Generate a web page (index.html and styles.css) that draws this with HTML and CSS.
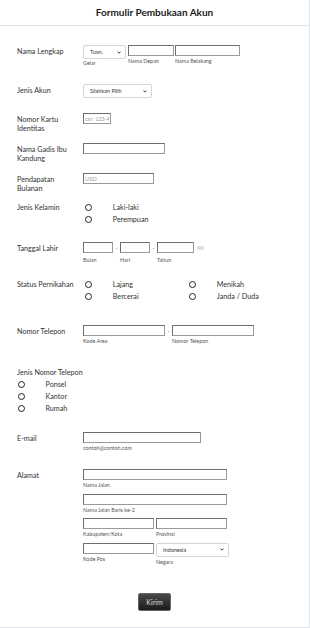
FILE: index.html
```html
<!DOCTYPE html>
<html lang="id">
<head>
    <meta charset="UTF-8">
    <meta name="viewport" content="width=device-width, initial-scale=1.0">
    <title>Formulir Pembukaan Akun</title>
    <link rel="stylesheet" href="styles.css">
</head>
<body>
    <div class="form">
        <div class="form-header">Formulir Pembukaan Akun</div>
        <div class="form-body">

            <div class="row row-name">
                <div class="label">Nama Lengkap</div>
                <div class="fields">
                    <div class="field">
                        <div class="select select-title"><span>Tuan.</span><svg width="4" height="3" viewBox="0 0 4 3"><path d="M0.4 0.5 L2 2.2 L3.6 0.5" fill="none" stroke="#333" stroke-width="0.9"/></svg></div>
                        <span class="sub sub-tight">Gelar</span>
                    </div>
                    <div class="field">
                        <input class="input w-first" type="text">
                        <span class="sub">Nama Depan</span>
                    </div>
                    <div class="field">
                        <input class="input w-last" type="text">
                        <span class="sub">Nama Belakang</span>
                    </div>
                </div>
            </div>

            <div class="row row-account">
                <div class="label">Jenis Akun</div>
                <div class="fields">
                    <div class="select select-account"><span>Silahkan Pilih</span><svg width="4" height="3" viewBox="0 0 4 3"><path d="M0.4 0.5 L2 2.2 L3.6 0.5" fill="none" stroke="#333" stroke-width="0.9"/></svg></div>
                </div>
            </div>

            <div class="row row-std">
                <div class="label">Nomor Kartu<br>Identitas</div>
                <div class="fields">
                    <input class="input w-id" type="text" placeholder="ctn: 123-45-6789">
                </div>
            </div>

            <div class="row row-std">
                <div class="label">Nama Gadis Ibu<br>Kandung</div>
                <div class="fields">
                    <input class="input w-wide" type="text">
                </div>
            </div>

            <div class="row row-income">
                <div class="label">Pendapatan<br>Bulanan</div>
                <div class="fields">
                    <input class="input w-half" type="text" placeholder="USD">
                </div>
            </div>

            <div class="row row-gender">
                <div class="label">Jenis Kelamin</div>
                <div class="options">
                    <div class="option"><span class="radio"></span>Laki-laki</div>
                    <div class="option"><span class="radio"></span>Perempuan</div>
                </div>
            </div>

            <div class="row row-birth">
                <div class="label">Tanggal Lahir</div>
                <div class="fields">
                    <div class="field">
                        <input class="input w-date" type="text">
                        <span class="sub sub-low">Bulan</span>
                    </div>
                    <span class="dash">-</span>
                    <div class="field">
                        <input class="input w-date" type="text">
                        <span class="sub sub-low">Hari</span>
                    </div>
                    <span class="dash">-</span>
                    <div class="field">
                        <input class="input w-year" type="text">
                        <span class="sub sub-low">Tahun</span>
                    </div>
                    <span class="calendar"></span>
                </div>
            </div>

            <div class="row row-status">
                <div class="label">Status Pernikahan</div>
                <div class="options options-grid">
                    <div class="option"><span class="radio"></span>Lajang</div>
                    <div class="option"><span class="radio"></span>Menikah</div>
                    <div class="option"><span class="radio"></span>Bercerai</div>
                    <div class="option"><span class="radio"></span>Janda / Duda</div>
                </div>
            </div>

            <div class="row row-phone">
                <div class="label">Nomor Telepon</div>
                <div class="fields">
                    <div class="field">
                        <input class="input w-wide" type="text">
                        <span class="sub">Kode Area</span>
                    </div>
                    <span class="dash">-</span>
                    <div class="field">
                        <input class="input w-wide" type="text">
                        <span class="sub">Nomor Telepon</span>
                    </div>
                </div>
            </div>

            <div class="block row-phone-type">
                <div class="label">Jenis Nomor Telepon</div>
                <div class="options options-left">
                    <div class="option"><span class="radio"></span>Ponsel</div>
                    <div class="option"><span class="radio"></span>Kantor</div>
                    <div class="option"><span class="radio"></span>Rumah</div>
                </div>
            </div>

            <div class="row row-email">
                <div class="label">E-mail</div>
                <div class="fields">
                    <div class="field">
                        <input class="input w-email" type="text">
                        <span class="sub">contoh@contoh.com</span>
                    </div>
                </div>
            </div>

            <div class="row row-address">
                <div class="label">Alamat</div>
                <div class="address">
                    <div class="field span-2">
                        <input class="input w-full" type="text">
                        <span class="sub">Nama Jalan</span>
                    </div>
                    <div class="field span-2">
                        <input class="input w-full" type="text">
                        <span class="sub">Nama Jalan Baris ke-2</span>
                    </div>
                    <div class="field">
                        <input class="input w-half" type="text">
                        <span class="sub">Kabupaten/Kota</span>
                    </div>
                    <div class="field">
                        <input class="input w-half" type="text">
                        <span class="sub">Provinsi</span>
                    </div>
                    <div class="field">
                        <input class="input w-half" type="text">
                        <span class="sub">Kode Pos</span>
                    </div>
                    <div class="field">
                        <div class="select select-country"><span>Indonesia</span><svg width="4" height="3" viewBox="0 0 4 3"><path d="M0.4 0.5 L2 2.2 L3.6 0.5" fill="none" stroke="#333" stroke-width="0.9"/></svg></div>
                        <span class="sub">Negara</span>
                    </div>
                </div>
            </div>

            <div class="actions">
                <button class="button" type="button">Kirim</button>
            </div>
        </div>
    </div>
</body>
</html>
```

FILE: styles.css
```css
:root {
    --color-text: #333;
    --color-sub: #555;
    --color-line: #dfe5ec;
    --color-input: #9a9a9a;
    --color-input-dark: #6e6e6e;
    --font-family: Lato, "Noto Sans", sans-serif;
}

* {
    box-sizing: border-box;
}

body {
    margin: 0;
    background: #fff;
    font-family: var(--font-family);
    color: var(--color-text);
}

.form {
    width: 310px;
    height: 628px;
    border-right: 1px solid var(--color-line);
    border-bottom: 1px solid var(--color-line);
    overflow: hidden;
}

.form-header {
    height: 26px;
    border-bottom: 1px solid var(--color-line);
    text-align: center;
    font-size: 10px;
    font-weight: 700;
    line-height: 25px;
    color: #222;
}

.form-body {
    padding: 19px 0 0 17px;
}

/* Строки формы */
.row {
    display: grid;
    grid-template-columns: 66px auto;
    align-items: start;
}

.row-name { height: 39px; }
.row-account { height: 29px; }
.row-std { height: 30px; }
.row-income { height: 28px; }
.row-gender { height: 41px; }
.row-birth { height: 36px; }
.row-status { height: 47px; }
.row-phone { height: 42.5px; }
.row-phone-type { height: 64.5px; }
.row-email { height: 37px; }
.row-address { height: 124px; }

.label {
    font-size: 7.2px;
    line-height: 9px;
    padding-top: 1.5px;
}

.row-phone-type .label {
    padding-top: 0;
}

.fields {
    display: flex;
    align-items: flex-start;
    gap: 1px;
}

.field {
    display: flex;
    flex-direction: column;
}

.sub {
    font-size: 5.4px;
    line-height: 6px;
    margin-top: 2px;
    color: var(--color-sub);
    white-space: nowrap;
}

.sub-tight { margin-top: 0.5px; }
.sub-low { margin-top: 4px; }

/* Поля ввода */
.input {
    display: block;
    height: 11px;
    margin: 0;
    padding: 0 1px;
    border: 1px solid var(--color-input);
    border-top-color: var(--color-input-dark);
    border-left-color: var(--color-input-dark);
    border-radius: 0;
    background: #fff;
    font-family: "Liberation Sans", sans-serif;
    font-size: 5.5px;
    color: #999;
    outline: none;
}

.input::placeholder {
    color: #9a9a9a;
}

.w-first { width: 46px; }
.w-last { width: 65px; }
.w-id { width: 28px; }
.w-wide { width: 82px; }
.w-half { width: 71px; }
.w-date { width: 30px; }
.w-year { width: 37px; }
.w-email { width: 118px; }
.w-full { width: 144px; }

.select {
    display: flex;
    align-items: center;
    justify-content: space-between;
    height: 14px;
    padding: 0 4px 0 6px;
    border: 1px solid #d4d4d4;
    border-radius: 2px;
    background: #fff;
    font-size: 5.5px;
    color: #333;
}

.select-title { width: 43px; margin-right: 1px; }
.select-account { width: 69px; }
.select-country { width: 73px; }

.dash {
    width: 5px;
    text-align: center;
    font-size: 6px;
    line-height: 11px;
    color: #666;
}

.calendar {
    width: 7px;
    height: 3.5px;
    margin: 4px 0 0 2px;
    border-radius: 2px;
    background: #ddd;
}

/* Радио-кнопки */
.options {
    display: flex;
    flex-direction: column;
}

.options-grid {
    display: grid;
    grid-template-columns: 104px 104px;
}

.option {
    display: flex;
    align-items: center;
    height: 12px;
    font-size: 7.2px;
    color: var(--color-text);
}

.radio {
    width: 7px;
    height: 7px;
    margin: 0 21px 0 1.75px;
    border: 1.2px solid #222;
    border-radius: 50%;
}

.options-left {
    margin-top: 1.5px;
}

.options-left .radio {
    margin-left: 0.5px;
}

/* Адрес */
.address {
    display: grid;
    grid-template-columns: 71px 73px;
    column-gap: 2px;
    row-gap: 5.5px;
}

.span-2 {
    grid-column: span 2;
}

/* Кнопка */
.actions {
    display: flex;
    justify-content: center;
    padding-right: 17px;
}

.button {
    width: 33px;
    height: 18px;
    padding: 0;
    border: 1px solid #666;
    border-radius: 2px;
    background: linear-gradient(#4a4a4a, #1b1b1b);
    color: #ddd;
    font-family: var(--font-family);
    font-size: 7px;
    cursor: pointer;
}
```
